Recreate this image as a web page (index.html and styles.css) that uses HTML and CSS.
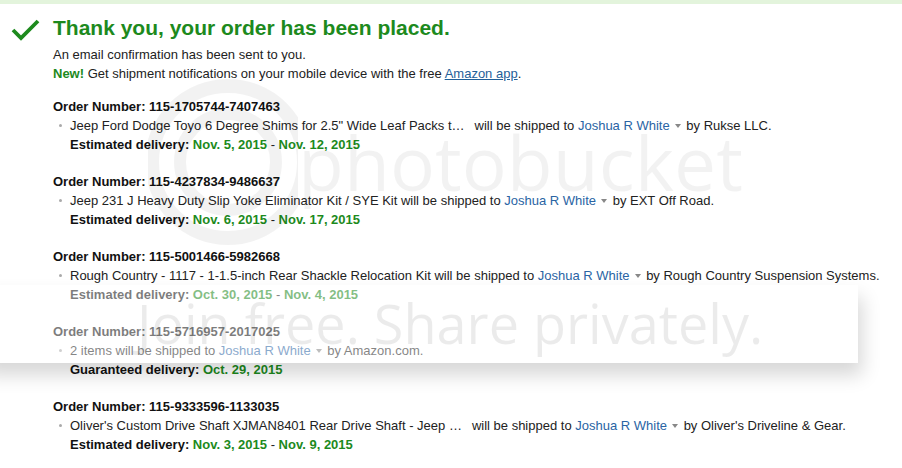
FILE: index.html
```html
<!DOCTYPE html>
<html>
<head>
<meta charset="utf-8">
<link rel="stylesheet" href="styles.css">
</head>
<body>
<div class="topbar"></div>
<div class="alert">
  <svg class="check" width="30" height="24" viewBox="0 0 30 24"><path d="M2 11 L10 19 L27 2" fill="none" stroke="#1d8a1d" stroke-width="3.8"/></svg>
  <div class="content">
    <h1 class="title">Thank you, your order has been placed.</h1>
    <p class="line">An email confirmation has been sent to you.</p>
    <p class="line"><b class="new">New!</b> Get shipment notifications on your mobile device with the free <a class="app">Amazon app</a>.</p>

    <div class="order">
      <div class="onum"><b>Order Number:</b> <span class="num">115-1705744-7407463</span></div>
      <ul class="items">
        <li class="item">Jeep Ford Dodge Toyo 6 Degree Shims for 2.5" Wide Leaf Packs t…<span class="gap"></span>will be shipped to <span class="to">Joshua R White</span><span class="caret"></span> by Rukse LLC.</li>
      </ul>
      <div class="del"><b>Estimated delivery:</b> <span class="d1">Nov. 5, 2015</span> - <span class="d2">Nov. 12, 2015</span></div>
    </div>

    <div class="order">
      <div class="onum"><b>Order Number:</b> <span class="num">115-4237834-9486637</span></div>
      <ul class="items">
        <li class="item">Jeep 231 J Heavy Duty Slip Yoke Eliminator Kit / SYE Kit will be shipped to <span class="to">Joshua R White</span><span class="caret"></span> by EXT Off Road.</li>
      </ul>
      <div class="del"><b>Estimated delivery:</b> <span class="d1">Nov. 6, 2015</span> - <span class="d2">Nov. 17, 2015</span></div>
    </div>

    <div class="order">
      <div class="onum"><b>Order Number:</b> <span class="num">115-5001466-5982668</span></div>
      <ul class="items">
        <li class="item">Rough Country - 1117 - 1-1.5-inch Rear Shackle Relocation Kit will be shipped to <span class="to">Joshua R White</span><span class="caret"></span> by Rough Country Suspension Systems.</li>
      </ul>
      <div class="del"><b>Estimated delivery:</b> <span class="d1">Oct. 30, 2015</span> - <span class="d2">Nov. 4, 2015</span></div>
    </div>

    <div class="order">
      <div class="onum"><b>Order Number:</b> <span class="num">115-5716957-2017025</span></div>
      <ul class="items">
        <li class="item">2 items will be shipped to <span class="to">Joshua R White</span><span class="caret"></span> by Amazon.com.</li>
      </ul>
      <div class="del"><b>Guaranteed delivery:</b> <span class="d1">Oct. 29, 2015</span></div>
    </div>

    <div class="order">
      <div class="onum"><b>Order Number:</b> <span class="num">115-9333596-1133035</span></div>
      <ul class="items">
        <li class="item">Oliver's Custom Drive Shaft XJMAN8401 Rear Drive Shaft - Jeep …<span class="gap"></span>will be shipped to <span class="to">Joshua R White</span><span class="caret"></span> by Oliver's Driveline &amp; Gear.</li>
      </ul>
      <div class="del"><b>Estimated delivery:</b> <span class="d1">Nov. 3, 2015</span> - <span class="d2">Nov. 9, 2015</span></div>
    </div>
  </div>
</div>

<div class="wm-logo">
  <svg width="150" height="180" viewBox="0 0 150 180"><g fill="none" stroke="rgba(0,0,0,0.05)"><circle cx="80" cy="90" r="76" stroke-width="14"/><circle cx="80" cy="90" r="48" stroke-width="12"/></g></svg>
</div>
<div class="wm-text">photobucket</div>
<div class="band"><span class="band-text">Join free. Share privately.</span></div>
</body>
</html>
```
FILE: styles.css
```css
html, body {
  margin: 0;
  padding: 0;
  background: #fff;
}
body {
  font-family: "Liberation Sans", Arial, sans-serif;
  font-size: 13px;
  color: #222;
  width: 902px;
  height: 468px;
  overflow: hidden;
  position: relative;
}
.topbar {
  height: 4px;
  background: #e3f4dc;
}
.alert {
  display: flex;
  padding: 11px 0 0 11px;
}
.check {
  margin-top: 4px;
  flex: none;
}
.content {
  margin-left: 12px;
}
.title {
  margin: 0 0 4px;
  font-size: 21px;
  line-height: 26px;
  font-weight: bold;
  color: #1d8a1d;
}
.line {
  margin: 0;
  line-height: 19px;
  color: #222;
}
.new {
  color: #1d8a1d;
}
.app {
  color: #1f5f99;
  text-decoration: underline;
}
.order {
  margin-top: 14px;
  line-height: 19px;
}
.order + .order {
  margin-top: 18px;
}
.onum b {
  color: #111;
}
.num {
  font-weight: bold;
  color: #111;
}
.items {
  margin: 0;
  padding: 0 0 0 17px;
  list-style: none;
}
.item {
  position: relative;
  color: #222;
}
.item::before {
  content: "";
  position: absolute;
  left: -11px;
  top: 8px;
  width: 3px;
  height: 3px;
  border-radius: 50%;
  background: #aaa;
}
.gap {
  display: inline-block;
  width: 10px;
}
.to {
  color: #2a64a4;
}
.caret {
  display: inline-block;
  width: 0;
  height: 0;
  margin: 0 2px 2px 5px;
  border-left: 3.5px solid transparent;
  border-right: 3.5px solid transparent;
  border-top: 4px solid #888;
  vertical-align: middle;
}
.del {
  padding-left: 17px;
}
.del b {
  color: #111;
}
.d1 {
  color: #1d8a1d;
}
.d2 {
  color: #1d8a1d;
  font-weight: bold;
}
.del .d1 {
  font-weight: bold;
}
.wm-logo {
  position: absolute;
  left: 148px;
  top: 72px;
}
.wm-text {
  position: absolute;
  left: 298px;
  top: 112px;
  font-family: "Open Sans", "Liberation Sans", sans-serif;
  font-size: 75px;
  color: rgba(0, 0, 0, 0.05);
  line-height: 100px;
}
.band {
  position: absolute;
  left: -20px;
  top: 285px;
  width: 878px;
  height: 78px;
  background: rgba(255, 255, 255, 0.45);
  box-shadow: 4px 12px 18px rgba(0, 0, 0, 0.16);
}
.band-text {
  position: absolute;
  left: 157px;
  top: 6px;
  font-family: "Open Sans", "Liberation Sans", sans-serif;
  font-size: 54px;
  line-height: 64px;
  color: rgba(0, 0, 0, 0.08);
  white-space: nowrap;
}
```
